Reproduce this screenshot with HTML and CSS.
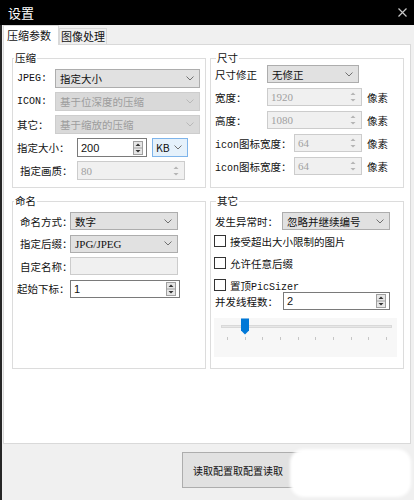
FILE: index.html
```html
<!DOCTYPE html>
<html lang="zh-CN">
<head>
    <meta charset="UTF-8">
    <meta name="viewport" content="width=device-width, initial-scale=1.0">
    <title>设置</title>
    <link rel="stylesheet" href="styles.css">
</head>
<body>
<div class="window">
    <div class="titlebar">
        <span>设置</span>
        <svg class="close" width="9" height="9" viewBox="0 0 9 9"><path d="M0.5 0.5 L8.5 8.5 M8.5 0.5 L0.5 8.5"/></svg>
    </div>

    <div class="frame">
        <div class="tabs">
            <div class="tab active">压缩参数</div>
            <div class="tab">图像处理</div>
        </div>

        <div class="pane">
            <!-- 压缩 -->
            <fieldset class="group">
                <legend>压缩</legend>
                <div class="rows r-compress">
                    <div class="row">
                        <span class="lbl w38 sim">JPEG:</span>
                        <div class="select w145">指定大小<svg class="chev" width="8" height="5" viewBox="0 0 8 5"><path d="M0.5 0.5 L4 4 L7.5 0.5"/></svg></div>
                    </div>
                    <div class="row">
                        <span class="lbl w38 sim">ICON:</span>
                        <div class="select off w145">基于位深度的压缩<svg class="chev" width="8" height="5" viewBox="0 0 8 5"><path d="M0.5 0.5 L4 4 L7.5 0.5"/></svg></div>
                    </div>
                    <div class="row">
                        <span class="lbl w38">其它：</span>
                        <div class="select off w145">基于缩放的压缩<svg class="chev" width="8" height="5" viewBox="0 0 8 5"><path d="M0.5 0.5 L4 4 L7.5 0.5"/></svg></div>
                    </div>
                    <div class="row">
                        <span class="lbl w60">指定大小：</span>
                        <div class="spin w70"><span>200</span><svg class="arrows" width="10" height="14" viewBox="0 0 10 14"><rect class="bx" x="0.5" y="0.5" width="9" height="13"/><path class="sep" d="M1 7 H9"/><path class="ar" d="M2.5 5 L5 2.5 L7.5 5Z M2.5 9 L5 11.5 L7.5 9Z"/></svg></div>
                        <div class="select kb w36">KB<svg class="chev" width="8" height="5" viewBox="0 0 8 5"><path d="M0.5 0.5 L4 4 L7.5 0.5"/></svg></div>
                    </div>
                    <div class="row">
                        <span class="lbl w60 ind">指定画质：</span>
                        <div class="spin off w108"><span>80</span><svg class="arrows" width="10" height="14" viewBox="0 0 10 14"><rect class="bx" x="0.5" y="0.5" width="9" height="13"/><path class="sep" d="M1 7 H9"/><path class="ar" d="M2.5 5 L5 2.5 L7.5 5Z M2.5 9 L5 11.5 L7.5 9Z"/></svg></div>
                    </div>
                </div>
            </fieldset>

            <!-- 尺寸 -->
            <fieldset class="group right">
                <legend>尺寸</legend>
                <div class="rows r-size">
                    <div class="row">
                        <span class="lbl w52">尺寸修正</span>
                        <div class="select w92">无修正<svg class="chev" width="8" height="5" viewBox="0 0 8 5"><path d="M0.5 0.5 L4 4 L7.5 0.5"/></svg></div>
                    </div>
                    <div class="row">
                        <span class="lbl w52">宽度：</span>
                        <div class="spin off w95"><span>1920</span><svg class="arrows" width="10" height="14" viewBox="0 0 10 14"><rect class="bx" x="0.5" y="0.5" width="9" height="13"/><path class="sep" d="M1 7 H9"/><path class="ar" d="M2.5 5 L5 2.5 L7.5 5Z M2.5 9 L5 11.5 L7.5 9Z"/></svg></div>
                        <span class="unit">像素</span>
                    </div>
                    <div class="row">
                        <span class="lbl w52">高度：</span>
                        <div class="spin off w95"><span>1080</span><svg class="arrows" width="10" height="14" viewBox="0 0 10 14"><rect class="bx" x="0.5" y="0.5" width="9" height="13"/><path class="sep" d="M1 7 H9"/><path class="ar" d="M2.5 5 L5 2.5 L7.5 5Z M2.5 9 L5 11.5 L7.5 9Z"/></svg></div>
                        <span class="unit">像素</span>
                    </div>
                    <div class="row">
                        <span class="lbl w79"><span class="sim">icon</span>图标宽度：</span>
                        <div class="spin off w68"><span>64</span><svg class="arrows" width="10" height="14" viewBox="0 0 10 14"><rect class="bx" x="0.5" y="0.5" width="9" height="13"/><path class="sep" d="M1 7 H9"/><path class="ar" d="M2.5 5 L5 2.5 L7.5 5Z M2.5 9 L5 11.5 L7.5 9Z"/></svg></div>
                        <span class="unit">像素</span>
                    </div>
                    <div class="row">
                        <span class="lbl w79"><span class="sim">icon</span>图标宽度：</span>
                        <div class="spin off w68"><span>64</span><svg class="arrows" width="10" height="14" viewBox="0 0 10 14"><rect class="bx" x="0.5" y="0.5" width="9" height="13"/><path class="sep" d="M1 7 H9"/><path class="ar" d="M2.5 5 L5 2.5 L7.5 5Z M2.5 9 L5 11.5 L7.5 9Z"/></svg></div>
                        <span class="unit">像素</span>
                    </div>
                </div>
            </fieldset>

            <!-- 命名 -->
            <fieldset class="group">
                <legend>命名</legend>
                <div class="rows r-name">
                    <div class="row">
                        <span class="lbl w53 ind">命名方式：</span>
                        <div class="select w108">数字<svg class="chev" width="8" height="5" viewBox="0 0 8 5"><path d="M0.5 0.5 L4 4 L7.5 0.5"/></svg></div>
                    </div>
                    <div class="row">
                        <span class="lbl w53 ind">指定后缀：</span>
                        <div class="select w108"><span class="serif">JPG/JPEG</span><svg class="chev" width="8" height="5" viewBox="0 0 8 5"><path d="M0.5 0.5 L4 4 L7.5 0.5"/></svg></div>
                    </div>
                    <div class="row">
                        <span class="lbl w53 ind">自定名称：</span>
                        <div class="field off w108"></div>
                    </div>
                    <div class="row">
                        <span class="lbl w53">起始下标：</span>
                        <div class="spin w110"><span>1</span><svg class="arrows" width="10" height="14" viewBox="0 0 10 14"><rect class="bx" x="0.5" y="0.5" width="9" height="13"/><path class="sep" d="M1 7 H9"/><path class="ar" d="M2.5 5 L5 2.5 L7.5 5Z M2.5 9 L5 11.5 L7.5 9Z"/></svg></div>
                    </div>
                </div>
            </fieldset>

            <!-- 其它 -->
            <fieldset class="group right">
                <legend>其它</legend>
                <div class="rows r-other">
                    <div class="row">
                        <span class="lbl w67">发生异常时：</span>
                        <div class="select w108">忽略并继续编号<svg class="chev" width="8" height="5" viewBox="0 0 8 5"><path d="M0.5 0.5 L4 4 L7.5 0.5"/></svg></div>
                    </div>
                    <div class="check first"><span class="box"></span><span>接受超出大小限制的图片</span></div>
                    <div class="check"><span class="box"></span><span>允许任意后缀</span></div>
                    <div class="check"><span class="box"></span><span>置顶<span class="sim">PicSizer</span></span></div>
                    <div class="row threads">
                        <span class="lbl w68">并发线程数：</span>
                        <div class="spin w107"><span>2</span><svg class="arrows" width="10" height="14" viewBox="0 0 10 14"><rect class="bx" x="0.5" y="0.5" width="9" height="13"/><path class="sep" d="M1 7 H9"/><path class="ar" d="M2.5 5 L5 2.5 L7.5 5Z M2.5 9 L5 11.5 L7.5 9Z"/></svg></div>
                    </div>
                    <svg class="slider" width="183" height="39" viewBox="0 0 183 39">
                        <rect x="0" y="0" width="183" height="39" fill="#f7f7f7"/>
                        <rect x="7.5" y="7.5" width="170" height="2" fill="#e7e7e7" stroke="#d9d9d9"/>
                        <g stroke="#c6c6c6">
                            <path d="M13.5 19 V22 M31.5 19 V22 M48.5 19 V22 M66.5 19 V22 M84.5 19 V22 M101.5 19 V22 M119.5 19 V22 M137.5 19 V22 M154.5 19 V22 M172.5 19 V22"/>
                        </g>
                        <path d="M27 0.5 H35 V12.5 L31 16.5 L27 12.5 Z" fill="#0078d7"/>
                    </svg>
                </div>
            </fieldset>
        </div>

        <div class="footer">
            <div class="btn">读取配置取配置读取</div>
            <div class="smudge"></div>
        </div>
    </div>
</div>
</body>
</html>
```

FILE: styles.css
```css
* {
    box-sizing: border-box;
}
body {
    margin: 0;
    font-family: "Noto Sans CJK SC", "Liberation Sans", sans-serif;
    font-size: 10.5px;
    color: #111;
    text-autospace: no-autospace;
}
.window {
    width: 414px;
    height: 500px;
    background: #f0f0f0;
    display: flex;
    flex-direction: column;
    overflow: hidden;
}
.titlebar {
    height: 25px;
    flex: none;
    background: #000;
    color: #fff;
    font-size: 13px;
    display: flex;
    align-items: center;
    justify-content: space-between;
    padding: 0 7px 0 8px;
}
.close {
    fill: none;
    stroke: #c8c8c8;
    stroke-width: 1.2;
}
.frame {
    flex: 1;
    display: flex;
    flex-direction: column;
    border-left: 2px solid #262626;
    padding: 0 3px 0 1px;
}

/* tabs */
.tabs {
    height: 19px;
    flex: none;
    display: flex;
    align-items: flex-end;
    position: relative;
    z-index: 1;
}
.tab {
    height: 16px;
    padding: 0 1px;
    line-height: 15px;
    font-size: 11px;
    background: #f0f0f0;
    border: 1px solid #d9d9d9;
    border-bottom: none;
}
.tab.active {
    height: 20px;
    margin-bottom: -1px;
    padding: 2px 7px 0 3px;
    background: #fff;
}
.pane {
    height: 400px;
    flex: none;
    background: #fff;
    border: 1px solid #d9d9d9;
    display: grid;
    grid-template-columns: 194px 194px;
    grid-template-rows: 137px 175px;
    column-gap: 4px;
    row-gap: 6px;
    padding: 6px 0 0 8px;
}

/* group boxes */
.group {
    margin: 0;
    padding: 0 4px;
    border: 1px solid #dcdcdc;
    min-width: 0;
}
.group legend {
    padding: 0 1px;
    margin-left: -3px;
    line-height: 14px;
}
.group.right legend {
    margin-left: 1px;
}
.rows {
    display: flex;
    flex-direction: column;
}
.r-compress {
    padding-top: 4px;
    gap: 4px;
}
.r-size {
    gap: 5px;
}
.r-name {
    padding-top: 4px;
    gap: 4.5px;
}
.r-other {
    padding-top: 4px;
}
.row {
    display: flex;
    align-items: center;
    height: 18px;
}
.r-compress .row {
    height: 19px;
}
.lbl {
    flex: none;
    white-space: nowrap;
}
.ind {
    padding-left: 3px;
}
.sim {
    font-family: "Liberation Mono", monospace;
    font-size: 10px;
}
.serif {
    font-family: "Liberation Serif", serif;
    font-size: 11px;
}
.w36 { width: 36px; }
.w38 { width: 38px; }
.w52 { width: 52px; }
.w53 { width: 53px; }
.w60 { width: 60px; }
.w67 { width: 67px; }
.w68 { width: 68px; }
.w70 { width: 70px; }
.w79 { width: 79px; }
.w92 { width: 92px; }
.w95 { width: 95px; }
.w107 { width: 107px; }
.w108 { width: 108px; }
.w110 { width: 110px; }
.w145 { width: 145px; }

/* controls */
.select {
    height: 100%;
    display: flex;
    align-items: center;
    justify-content: space-between;
    padding: 0 5px 0 4px;
    background: #e1e1e1;
    border: 1px solid #adadad;
    white-space: nowrap;
}
.select.off {
    background: #d9d9d9;
    border-color: #cdcdcd;
    color: #9d9d9d;
}
.select.kb {
    margin-left: 5px;
    padding-left: 3px;
    background: #e5f1fb;
    border-color: #7eb4ea;
}
.chev {
    flex: none;
    fill: none;
    stroke: #707070;
}
.select.off .chev {
    stroke: #b8b8b8;
}
.spin {
    height: 100%;
    display: flex;
    align-items: center;
    justify-content: space-between;
    padding: 0 3px 0 3px;
    background: #fff;
    border: 1px solid #7a7a7a;
    font-family: "Liberation Sans", sans-serif;
    font-size: 11px;
}
.spin.off {
    background: #f0f0f0;
    border-color: #cccccc;
    color: #a0a0a0;
    font-family: "Liberation Serif", serif;
}
.arrows .bx {
    fill: #e6e6e6;
    stroke: #a0a0a0;
}
.arrows .sep {
    stroke: #a0a0a0;
}
.arrows .ar {
    fill: #333;
}
.spin.off .bx,
.spin.off .sep {
    fill: none;
    stroke: none;
}
.spin.off .ar {
    fill: #b4b4b4;
}
.field {
    height: 100%;
    border: 1px solid #cccccc;
    background: #f0f0f0;
}
.unit {
    margin-left: 5px;
}
.check {
    display: flex;
    align-items: center;
    gap: 4px;
    height: 14px;
    margin-left: -1px;
    margin-top: 8px;
}
.check.first {
    margin-top: 4px;
}
.box {
    width: 12px;
    height: 12px;
    border: 1px solid #333;
    background: #fff;
}
.threads {
    margin-top: 0;
}
.slider {
    display: block;
    margin: 8px 0 0 -1px;
}

/* bottom bar */
.footer {
    flex: 1;
    position: relative;
    padding: 8px 0 0 179px;
}
.btn {
    width: 123px;
    height: 36px;
    display: flex;
    align-items: center;
    padding-left: 10px;
    background: #e1e1e1;
    border: 1px solid #adadad;
    font-size: 10px;
    white-space: nowrap;
    overflow: hidden;
}
.smudge {
    position: absolute;
    left: 287px;
    top: 5px;
    width: 121px;
    height: 48px;
    background: #fff;
    border-radius: 14px;
    filter: blur(1.5px);
}
```
